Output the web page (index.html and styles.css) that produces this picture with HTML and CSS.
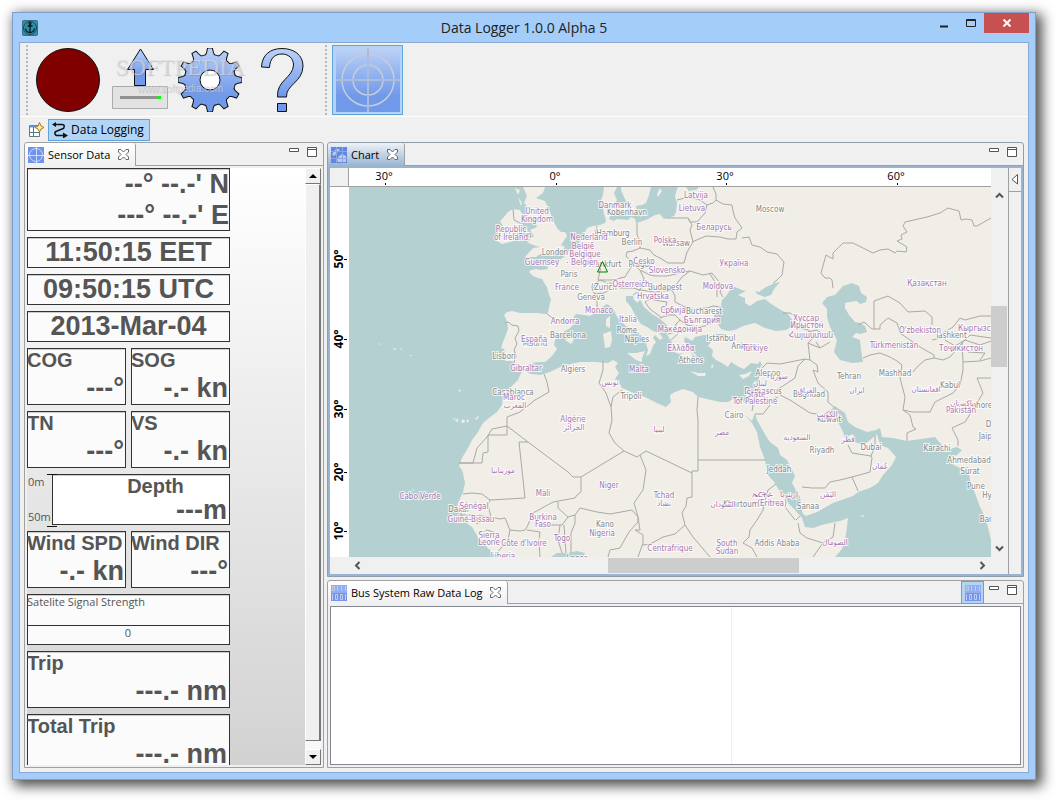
FILE: index.html
```
<!DOCTYPE html>
<html lang="en">
<head>
<meta charset="utf-8">
<title>Data Logger 1.0.0 Alpha 5</title>
<link rel="stylesheet" href="styles.css">
</head>
<body>
<svg class="defs" aria-hidden="true">
  <defs>
    <linearGradient id="blue" x1="0" y1="0" x2="0" y2="1"><stop offset="0" stop-color="#bcd2f7"/><stop offset=".75" stop-color="#7099ea"/><stop offset="1" stop-color="#7099ea"/></linearGradient>
    <path id="tooth" d="M-5 -23L-3 -27L-2 -31.500H2L3 -27L5 -23Z"/>
    <g id="teeth">
      <use href="#tooth"/><use href="#tooth" transform="rotate(30)"/><use href="#tooth" transform="rotate(60)"/><use href="#tooth" transform="rotate(90)"/>
      <use href="#tooth" transform="rotate(120)"/><use href="#tooth" transform="rotate(150)"/><use href="#tooth" transform="rotate(180)"/><use href="#tooth" transform="rotate(210)"/>
      <use href="#tooth" transform="rotate(240)"/><use href="#tooth" transform="rotate(270)"/><use href="#tooth" transform="rotate(300)"/><use href="#tooth" transform="rotate(330)"/>
    </g>
    <clipPath id="gearshape">
      <circle r="25"/>
      <use href="#tooth"/><use href="#tooth" transform="rotate(30)"/><use href="#tooth" transform="rotate(60)"/><use href="#tooth" transform="rotate(90)"/>
      <use href="#tooth" transform="rotate(120)"/><use href="#tooth" transform="rotate(150)"/><use href="#tooth" transform="rotate(180)"/><use href="#tooth" transform="rotate(210)"/>
      <use href="#tooth" transform="rotate(240)"/><use href="#tooth" transform="rotate(270)"/><use href="#tooth" transform="rotate(300)"/><use href="#tooth" transform="rotate(330)"/>
    </clipPath>
    <symbol id="cross" viewBox="0 0 11 11"><path d="M.5 .5H3L5.500 3L8 .5H10.500V3L8 5.500L10.500 8V10.500H8L5.500 8L3 10.500H.5V8L3 5.500L.5 3Z" fill="#fff" stroke="#666"/></symbol>
    <symbol id="min" viewBox="0 0 11 11"><path d="M.5 1.500H9.500V4.500H.5Z" fill="#fff" stroke="#555"/></symbol>
    <symbol id="max" viewBox="0 0 11 11"><path d="M.5 .5H9.500V9.500H.5ZM.5 2.500H9.500" fill="#fff" stroke="#555"/></symbol>
    <symbol id="bits" viewBox="0 0 16 16"><rect width="16" height="16" fill="#7695ee"/><rect width="16" height="8" fill="#92aef0"/><path d="M1.500 1.500h2v4h-2zM6.500 1v5M10.500 1v5M14.500 1v5M1.500 9v6M4.500 9.500h2v5h-2zM9.500 9.500h2v5h-2zM14.500 9v6" fill="none" stroke="#c0cde4"/></symbol>
  </defs>
</svg>
<main class="window">
  <header class="titlebar">
    <svg class="appicon" viewBox="0 0 16 16"><rect x=".5" y=".5" width="15" height="15" rx="1" fill="#2f8fa8" stroke="#3a6f80"/><circle cx="8" cy="8" r="6.500" fill="none" stroke="#174a5a"/><path d="M8 3V13M3.500 8.500C4 11.500 6 12.500 8 12.500S12 11.500 12.500 8.500M5.500 6H10.500" fill="none" stroke="#0b1a20" stroke-width="1.300"/><circle cx="8" cy="3.500" r="1.200" fill="none" stroke="#0b1a20"/></svg>
    <h1 class="title">Data Logger 1.0.0 Alpha 5</h1>
    <div class="winbuttons">
      <button class="winbtn" aria-label="Minimize"><svg width="11" height="9"><path d="M2 7.500H10" stroke="#222" stroke-width="2"/></svg></button>
      <button class="winbtn" aria-label="Maximize"><svg width="11" height="9"><path d="M1.500 .5H10.500V7.500H1.500ZM1 1.500H11" fill="none" stroke="#222"/></svg></button>
      <button class="winbtn close" aria-label="Close"><svg width="10" height="8"><path d="M1.500 .5L8.500 7.500M8.500 .5L1.500 7.500" stroke="#fff" stroke-width="2"/></svg></button>
    </div>
  </header>
  <div class="client">
    <div class="toolbar">
      <span class="grip"></span>
      <button class="tool" aria-label="Record"><svg viewBox="-32 -32 64 64"><circle r="31.500" fill="#800000" stroke="#111"/></svg></button>
      <button class="tool" aria-label="Export"><svg viewBox="-1 0 64 64"><path d="M4.500 38.500H59.500V60.500H4.500Z" fill="#e2e2e2" stroke="#aaa"/><path d="M12 49.500H52" stroke="#909090" stroke-width="3"/><path d="M49 48H53V51H49Z" fill="#0f0"/><path d="M32.500 1L45.500 21.500H37.500V37.500H26.500V21.500H19.500Z" fill="url(#blue)" stroke="#111"/></svg></button>
      <button class="tool" aria-label="Settings"><svg viewBox="-32 -32 64 64"><g fill="#111" stroke="#111" stroke-width="2"><circle r="25"/><use href="#teeth"/></g><rect x="-32" y="-32" width="64" height="64" fill="url(#blue)" clip-path="url(#gearshape)"/><circle r="10" fill="#fff" stroke="#111"/></svg></button>
      <button class="tool" aria-label="Help"><svg viewBox="-1 0 64 64"><path d="M11.500 19C12 7 20 .5 32 .5C44 .5 53 7 53 18C53 34 35.500 37 36.500 49H27.500C26.500 32 43 30 43.500 17C43.500 10 38 6 32 6C25 6 20 10 19.500 19.500ZM27.500 55.500H36.500V63.500H27.500Z" fill="url(#blue)" stroke="#111"/></svg></button>
      <span class="grip second"></span>
      <button class="tool target" aria-label="Sensor target"><svg viewBox="0 0 64 64"><rect width="64" height="64" fill="url(#blue)"/><g fill="none" stroke="#c6ccd8" stroke-width="1.500"><circle cx="32" cy="32" r="26"/><circle cx="32" cy="32" r="15"/><path d="M0 32H64M32 0V64" stroke="#aebcdc" stroke-width="2"/></g></svg></button>
      <div class="watermark"><span>SOFTPEDIA</span><small>www.softpedia.com</small></div>
    </div>
    <nav class="perspectives">
      <button class="openpersp" aria-label="Open perspective"><svg viewBox="0 0 16 16"><path d="M1.500 3.500H11.500V14.500H1.500Z" fill="#fff" stroke="#6a7a6a"/><path d="M2 4.500H11" stroke="#5a9adf" stroke-width="2"/><path d="M5.500 5V14M2 10.500H11" stroke="#4a7a9a"/><path d="M11.500 .5L13 4L16 5.500L13 7L11.500 10L10 7L7 5.500L10 4Z" fill="#ffe9a0" stroke="#a07a20"/></svg></button>
      <button class="persp"><svg viewBox="0 0 16 16"><path d="M4 2.500H10C13 2.500 13 6 10 7L5 9C2 10 2 13.500 6 13.500H12" fill="none" stroke="#111" stroke-width="1.500"/><path d="M0 2.500L4 0V5ZM16 13.500L11 10.500V16.500Z" fill="#111"/></svg>Data Logging</button>
    </nav>
    <div class="workspace">
      <section class="panel sensors">
        <div class="tabs">
          <button class="tab"><svg viewBox="0 0 16 16"><rect width="16" height="16" fill="#6f93ea"/><g fill="none" stroke="#cfdcf8"><circle cx="8" cy="8" r="6.500"/><path d="M0 8.500H16M8.500 0V16"/></g></svg>Sensor Data<svg class="x"><use href="#cross"/></svg></button>
          <div class="viewbtns"><button aria-label="Minimize view"><svg><use href="#min"/></svg></button><button aria-label="Maximize view"><svg><use href="#max"/></svg></button></div>
        </div>
        <div class="sensorbody">
          <div class="scrollarea">
            <div class="instruments">
              <div class="box position"><p class="value">--° --.-' N</p><p class="value">---° --.-' E</p></div>
              <div class="box clock">11:50:15 EET</div>
              <div class="box clock">09:50:15 UTC</div>
              <div class="box clock">2013-Mar-04</div>
              <div class="pair"><div class="box gauge"><h2>COG</h2><p class="value">---°</p></div><div class="box gauge"><h2>SOG</h2><p class="value">-.- kn</p></div></div>
              <div class="pair"><div class="box gauge"><h2>TN</h2><p class="value">---°</p></div><div class="box gauge"><h2>VS</h2><p class="value">-.- kn</p></div></div>
              <div class="depth"><div class="scale"><span>0m</span><span>50m</span></div><div class="box"><h2>Depth</h2><p class="value">---m</p></div></div>
              <div class="pair"><div class="box gauge"><h2>Wind SPD</h2><p class="value">-.- kn</p></div><div class="box gauge"><h2>Wind DIR</h2><p class="value">---°</p></div></div>
              <div class="box signal"><p>Satelite Signal Strength</p><p class="count">0</p></div>
              <div class="box gauge wide"><h2>Trip</h2><p class="value">---.- nm</p></div>
              <div class="box gauge wide"><h2>Total Trip</h2><p class="value">---.- nm</p></div>
            </div>
          </div>
          <div class="classicbar"><button aria-label="Scroll up"><svg width="8" height="4"><path d="M0 4L4 0L8 4Z"/></svg></button><div class="thumb"></div><button aria-label="Scroll down"><svg width="8" height="4"><path d="M0 0L4 4L8 0Z"/></svg></button></div>
        </div>
      </section>
      <section class="panel chart">
        <div class="tabs">
          <button class="tab active"><svg viewBox="0 0 16 16"><rect width="16" height="16" fill="#5f86e4"/><path d="M1 7L5 2H9L6 6L3 9ZM6 13L8 9L11 7L15 9V15H7Z" fill="#b9cbf2"/><path d="M0 4.500H16M0 11.500H16M5.500 0V16M11.500 0V16" stroke="#8fa6dc"/></svg>Chart<svg class="x"><use href="#cross"/></svg></button>
          <div class="viewbtns"><button aria-label="Minimize view"><svg><use href="#min"/></svg></button><button aria-label="Maximize view"><svg><use href="#max"/></svg></button></div>
        </div>
        <div class="chartbody">
          <div class="corner"></div>
          <svg class="ruler top" viewBox="349 168 642 18" preserveAspectRatio="xMidYMid slice"><path d="M385.500 183V185M556.500 183V185M726.500 183V185M897.500 183V185" stroke="#000"/><text x="384" y="180">30°</text><text x="555" y="180">0°</text><text x="725" y="180">30°</text><text x="896" y="180">60°</text></svg>
          <div class="filler"></div>
          <div class="sidestrip"><button aria-label="Show palette"><svg width="9" height="11"><path d="M6.500 .5V10L1 5.500Z" fill="#fff" stroke="#555"/></svg></button></div>
          <svg class="ruler left" viewBox="330 187 19 370" preserveAspectRatio="xMidYMid slice"><path d="M344 259.500H347M344 339.500H347M344 409.500H347M344 472.500H347M344 531.500H347" stroke="#000"/><g><text transform="translate(343 259) rotate(-90)">50°</text><text transform="translate(343 339) rotate(-90)">40°</text><text transform="translate(343 409) rotate(-90)">30°</text><text transform="translate(343 472) rotate(-90)">20°</text><text transform="translate(343 531) rotate(-90)">10°</text></g></svg>
          <svg class="map" viewBox="349 187 642 370" preserveAspectRatio="xMidYMid slice">
            <rect class="land" x="349" y="187" width="642" height="370"/>
            <g class="sea">
              <path d="M349 187L604 187L603 195L601 200L602 205L604 214L606 220L605 223L600 225L593 226L587 228L583 236L579 243L576 247L571 250L566 252L565 256L561 259L557 262L552 263L549 261L547 264L548 269L541 270L536 269L531 270L529 272L532 275L535 277L542 279L545 284L547 287L549 295L551 299L550 303L548 312L546 314L537 313L520 313L512 311L507 312L504 315L506 319L507 322L508 328L507 332L503 342L501 348L504 349L505 353L506 358L505 361L512 361L516 363L520 366L525 368L523 371L521 373L518 380L510 388L505 392L503 396L502 405L497 412L489 418L483 423L478 432L472 440L468 448L462 458L459 466L462 470L463 473L465 483L463 492L458 503L457 508L462 513L463 520L468 524L472 527L478 537L483 543L493 553L495 557L349 557Z"/>
              <path d="M617 187L614 193L617 200L612 207L611 214L609 219L614 221L617 219L628 220L631 217L635 219L636 223L640 222L648 219L655 215L660 214L664 219L668 218L674 216L676 212L677 203L675 197L676 192L678 187H651L649 195L646 203L642 205L636 206L637 211L634 213L630 212L628 205L624 197L621 190V187Z"/><path d="M686 187L689 191L696 190L699 187Z"/>
              <path d="M523 370L526 368L530 363L540 362L545 362L552 356L557 349L554 345L555 340L561 333L569 329L574 324L573 318L576 314L584 315L590 316L596 312L600 309L607 304L613 308L616 315L620 321L626 326L634 330L640 334L645 340L648 350L646 356L650 354L653 346L656 342L653 338L655 335L660 340L663 338L659 333L653 331L647 327L641 324L636 317L631 307L626 301V296L633 296L634 300L638 303L640 299L644 307L652 314L660 319L667 325L667 334L671 341L676 348L674 352L679 354L683 353L679 357L681 363L684 360L686 364L689 362L692 364L691 357L693 356L690 351L687 346L684 341L685 337L689 339L692 341L695 337L704 335L708 335L706 340L711 342L708 346L713 350L712 356L716 360L722 363L728 367L731 362L739 367L744 369L751 363L758 364L760 361L762 365L759 369L760 374L758 384L754 393L750 399L746 402L740 401L733 399L728 402L720 402L707 399L698 397L693 392L683 389L675 392L670 395L671 402L666 407L657 403L645 397L640 395L631 392L622 388L620 384L615 379L619 373L615 367L618 363L613 360L608 363L595 362L580 362L571 364L560 367L550 372L540 375L531 374Z"/>
              <path d="M711 338L716 334L725 334L723 338L717 339Z"/>
              <path d="M714 318L721 329L728 331L735 330L743 326L755 323L765 328L776 331L786 330L793 326L793 321L788 314L779 309L770 303L765 299L757 301L750 306L745 303L745 298L738 295L746 291L742 290L735 287L731 289L726 296L722 300L721 306L714 313Z"/>
              <path d="M765 297L757 294L755 291L759 292L766 287L775 283L780 282L774 289L771 295Z"/>
              <path d="M822 303L827 297L835 295L843 286L852 283L859 286L861 293L867 297L866 302L860 304L857 301L850 302L845 303L845 308L849 315L855 322L860 323L865 326L867 332L860 334L856 333L852 337L860 340L861 350L863 362L852 363L840 360L834 352L837 340L830 327L827 317L827 309Z"/>
              <path d="M745 415L752 423L757 432L760 447L765 460L768 475L775 483L780 492L785 499L790 505L795 510L802 518L805 527L813 528L822 525L830 523L840 521L848 518L847 527L845 540L842 549L835 557H991V540L988 527L984 515L980 507L975 493L970 480L968 467L960 468L952 464L947 458L957 455L962 450L957 447L947 450L940 443L935 437L921 439L907 441L893 438L882 437L880 428L876 430L867 432L855 427L848 422L845 413L839 409L835 406L830 411L833 416L838 422L843 432L847 442L849 443L848 436L853 434L855 442L863 445L869 441L877 434L880 445L888 448L896 457L892 465L883 475L878 483L870 488L858 492L853 496L833 503L817 512L806 516L803 514L801 507L800 497L792 483L795 476L787 460L780 455L778 448L770 442L766 436L757 420L755 413L752 421Z"/>
              <path d="M551 557L557 553L568 553L577 551L585 553L583 557Z"/>
            </g>
            <g class="land">
              <path d="M523 187H545L543 193L536 198L545 201L550 212L553 220L557 228L561 232L565 232L567 236L561 245L565 247L563 250L553 253L547 255L540 254L536 257L525 257L533 248L540 247L533 245L527 242L534 236L530 230L537 227L535 222L538 218L532 217L525 215L529 208L524 203L527 196Z"/><path d="M503 218L508 212L513 209L520 210L524 217L520 223L522 230L520 238L510 242L502 244L495 240L499 235L497 228L503 226L500 221Z"/>
              <path d="M515 188L520 190L518 195ZM518 197L522 203L521 206ZM620 206L626 204L628 208L624 214L619 210ZM612 209L618 209L616 214ZM657 194L660 188L662 191L658 197ZM603 334L611 331L612 340L610 347L605 348L604 341ZM606 319L610 316L610 328L606 326ZM627 353L636 353L645 351L642 358V362L636 360ZM690 371L698 373L706 373L705 376L698 376ZM739 375L745 374L752 371L749 376L743 379ZM565 340L570 337L574 340L571 344ZM860 516L865 515L863 517ZM711 366L714 364L712 369ZM693 352L697 356L695 357L688 348Z"/>
              <path d="M378 343l2 1l-1 1zM393 348l4 1l-3 1zM400 348l2 1l-1 1zM409 355l4 1h-3zM458 390h3l-1 2zM453 418l3 1l-2 1zM455 421l3-3v4zM461 421l3-2l1 3l-3 1zM466 421l3-2l-1 4zM475 419l3-3l1 1l-3 3zM412 490l2-1v2zM418 499l2-1l-1 3z"/>
            </g>
            <g class="border">
              <path d="M505 323L508 322L512 325L518 326L519 331L515 338L517 344L514 350L516 356L514 362M513 209L514 220L520 223M546 313L551 317L557 320L565 322L572 321M677 200L685 198L693 198L700 200L707 205L713 203L716 200L723 204L732 205L733 211L735 218L742 228L737 232L736 239L728 239L720 237L706 236L692 242M713 187L716 194V200M667 218L688 218L690 222L697 222L705 213L707 205M688 218L692 225L690 230L693 242L687 252L684 263M637 223L637 235L640 241L640 248L633 251L627 252L626 256L633 264L640 270M640 248L650 250L654 255L660 258L668 263L684 263M640 270L650 275L655 276L667 276L680 273L690 271L703 275L712 273L720 283L722 287L720 292L723 297"/>
              <path d="M577 247L585 249L588 248L594 240L597 226M577 252L588 262L593 265L601 266L598 280L600 280L612 280L625 277L633 264M592 290L596 283L600 280L608 283L612 283L609 290L604 293L595 294L592 290L597 297L597 309M612 283L620 288L633 288L640 290L644 279L640 270M633 295L640 290L655 292L672 290L682 277L690 271M672 290L675 296L675 302L685 307L695 309L707 308L713 306L720 307M710 274L715 282L717 287L717 297M645 302L650 309L662 318M645 302L650 299L660 301L667 302L665 309L667 317M660 318L668 315L675 315L680 320L676 324L675 332L668 334M685 307L687 313L684 318L687 325L697 327L705 326L713 322M671 340L680 332L687 326M680 320L687 325"/>
              <path d="M742 238L749 237L752 245L760 247L767 252L777 254L784 262L782 275L777 280L773 283M783 313L790 313L800 318L815 325L822 322M793 326L808 330L815 336L808 343L820 348L830 342M808 332L817 330L822 334L833 332M820 348L816 342M760 372L762 368L767 363L780 364L790 362L805 359L810 360L808 343M810 360L817 365L818 372L813 370L818 383L828 392L828 402L835 408M805 359L798 366L795 378L780 388L763 394M780 389L780 395L790 400L810 413L823 415L830 411M755 414L763 414L770 405L765 403L778 397M754 400L752 411M762 382L758 389L756 400"/>
              <path d="M802 487L812 488L825 488L830 482L840 480L852 477L870 472L872 458L871 456L852 453L848 445M852 477L858 491M871 456L875 446V435M698 397L697 410L698 420V471H692L692 497L687 498L686 506L682 513L685 525L693 537L710 557M698 460H766M692 473L646 451L637 457L624 451L615 443L609 433L612 420L611 407L606 393L599 383L603 370L603 361M611 407L613 397L622 390M624 451L581 477H573L568 472L528 442L507 426V417L520 412L535 400L549 392L547 382L544 374M507 426L492 429L487 437L477 448L473 463H459M507 426V435H488V452L483 453L482 463H459M528 442H519L525 498L490 500L482 494L472 493L463 494"/>
              <path d="M490 500L488 505L491 517L473 515H458M491 517L482 521L476 524M491 517L500 519L505 518L510 530L508 540L495 555M478 534L487 530L496 533L495 543M510 530L520 531L525 530L527 527L533 513L553 502L575 498L577 495L581 492V477M527 530L540 532L539 540L540 557M558 502L558 508L568 517L562 525L540 525M560 525L558 540L562 553M564 525L565 540L566 553M568 517L575 515L575 523L571 533L571 553M575 515L580 508L597 512L610 514L632 510L638 517L638 522L629 532L620 548L610 550L608 557M640 455L646 470L643 490L634 503L638 517L640 530L635 530L643 535L643 543L638 557M643 545L650 544L663 537L675 534L685 525"/>
              <path d="M776 484L768 490L765 500L763 510L757 520L750 530L749 537L743 543L752 548L757 557M764 502L775 503L785 507L795 520M798 523L800 533L807 538L823 543L833 537L835 523M823 543L813 557M796 520L800 516M991 218L977 226L974 226L972 220L966 219L961 220L959 211L948 208L940 213L927 217L905 222L903 226L907 232L901 235L902 239L897 241L907 247L906 252L897 251L895 253L888 249L880 250L873 253L853 243L843 243L833 253L833 259L826 255L821 273L825 278L830 278L832 280L833 288"/>
              <path d="M858 325L864 322L872 329H874V301L888 296L900 303L908 312L925 311L932 317L932 325M874 329L880 329L880 325L888 318L897 323L900 333L910 340L920 347L934 355V358M863 358L870 355L880 353L890 357L897 361L902 365L900 378L905 397L903 410L910 415L913 427L916 429L907 433V441M913 372L918 366L925 360L934 358L943 360L950 357L962 343L970 335L991 338M903 410L912 412L930 412L935 402L953 393L960 385L963 370L963 362L980 361L991 358M991 378H977L983 393L977 403L965 422L952 428L958 440V446M932 340L940 338L943 333L953 327L960 318L965 320L980 316L991 316M962 343L963 362M945 340L955 346L965 340L980 345L991 341M968 352L985 353L980 360"/>
            </g>
            <g class="city">
              <text x="770" y="212">Moscow</text><text x="627" y="215">Kobenhavn</text><text x="613" y="236">Hamburg</text><text x="632" y="245">Berlin</text><text x="676" y="246">Warsaw</text><text x="605" y="267">Frankfurt</text><text x="641" y="267">Prague</text><text x="569" y="277">Paris</text><text x="555" y="255">London</text><text x="604" y="290">(Zurich</text><text x="665" y="290">Budapest</text><text x="591" y="300">Geneva</text><text x="704" y="314">Bucharest</text><text x="627" y="333">Rome</text><text x="637" y="342">Naples</text><text x="721" y="341">Istanbul</text><text x="744" y="349">Ankara</text><text x="691" y="363">Athens</text><text x="568" y="338">Barcelona</text><text x="535" y="346">Madrid</text><text x="504" y="359">Lisbon</text><text x="573" y="372">Algiers</text><text x="513" y="395">Casablanca</text><text x="631" y="399">Tripoli</text><text x="734" y="418">Cairo</text><text x="768" y="376">Aleppo</text><text x="763" y="394">Damascus</text><text x="809" y="397">Baghdad</text><text x="849" y="379">Tehran</text><text x="895" y="376">Mashhad</text><text x="950" y="388">Kabul</text><text x="951" y="338">Tashkent</text><text x="829" y="422">Kuwait</text><text x="822" y="453">Riyadh</text><text x="871" y="450">Dubai</text><text x="779" y="472">Jeddah</text><text x="741" y="507">Khartoum</text><text x="808" y="509">Sanaa</text><text x="777" y="546">Addis Ababa</text><text x="937" y="451">Karachi</text><text x="969" y="463">Ahmedabad</text><text x="970" y="474">Surat</text><text x="976" y="489">Pune</text><text x="605" y="527">Kano</text><text x="459" y="512">Dakar</text><text x="980" y="408">Lahore</text><text x="995" y="427">Delhi</text><text x="989" y="439">Jaipur</text><text x="1002" y="498">Hyderabad</text><text x="998" y="522">Bangalore</text><text x="520" y="238">Dublin</text><text x="577" y="561">Lagos</text>
            </g>
            <g class="country">
              <text x="537" y="214">United</text><text x="537" y="222">Kingdom</text><text x="511" y="232">Republic</text><text x="511" y="240">of Ireland</text><text x="542" y="265">Guernsey</text><text x="615" y="208">Danmark</text><text x="696" y="198">Latvija</text><text x="692" y="211">Lietuva</text><text x="714" y="230">Беларусь</text><text x="589" y="240">Nederland</text><text x="583" y="249">België</text><text x="585" y="257">Belgique</text><text x="582" y="265">- Belgien</text><text x="665" y="243">Polska</text><text x="644" y="264">Česko</text><text x="667" y="273">Slovensko</text><text x="734" y="266">Україна</text><text x="567" y="290">France</text><text x="631" y="287">Österreich</text><text x="653" y="299">Hrvatska</text><text x="718" y="289">Moldova</text><text x="599" y="313">Monaco</text><text x="673" y="313">Србија</text><text x="702" y="323">България</text><text x="628" y="322">Italia</text><text x="680" y="332">Македонија</text><text x="565" y="324">Andorra</text><text x="534" y="342">España</text><text x="681" y="351">Ελλάδα</text><text x="755" y="351">Türkiye</text><text x="639" y="372">Malta</text><text x="526" y="371">Gibraltar</text><text x="806" y="321">Хуссар</text><text x="807" y="328">Ирыстон</text><text x="811" y="338">Հայաստան</text><text x="927" y="286">Қазақстан</text><text x="920" y="333">O'zbekiston</text><text x="981" y="331">Кыргызстан</text><text x="961" y="351">Тоҷикистон</text><text x="894" y="348">Türkmenistan</text><text x="514" y="400">Maroc</text><text x="515" y="408">المغرب</text><text x="573" y="422">Algérie</text><text x="574" y="430">الجزائر</text><text x="610" y="385">تونس</text><text x="659" y="432">ليبيا</text><text x="722" y="435">مصر</text><text x="503" y="473">موريتانيا</text><text x="420" y="499">Cabo Verde</text><text x="474" y="509">Sénégal</text><text x="471" y="522">Guiné-Bissau</text><text x="489" y="538">Sierra</text><text x="489" y="545">Leone</text><text x="524" y="546">Côte d'Ivoire</text><text x="503" y="559">Liberia</text><text x="543" y="496">Mali</text><text x="543" y="520">Burkina</text><text x="543" y="527">Faso</text><text x="562" y="541">Togo</text><text x="609" y="488">Niger</text><text x="602" y="536">Nigeria</text><text x="664" y="498">Tchad</text><text x="664" y="506">تشاد</text><text x="670" y="551">Centrafrique</text><text x="727" y="546">South</text><text x="727" y="554">Sudan</text><text x="723" y="507">السودان</text><text x="762" y="497">ኤርትራ</text><text x="789" y="497">إريتريا</text><text x="772" y="506">(Eritrea)</text><text x="779" y="379">سوريا</text><text x="760" y="386">لبنان</text><text x="756" y="397">State</text><text x="755" y="404">Tof Palestine</text><text x="807" y="393">العراق</text><text x="857" y="393">ایران</text><text x="926" y="392">افغانستان</text><text x="962" y="406">پاکستان</text><text x="961" y="413">Pakistan</text><text x="827" y="417">الكويت</text><text x="797" y="440">السعودية</text><text x="848" y="442">قطر</text><text x="880" y="469">عُمان</text><text x="828" y="497">اليَمَن</text><text x="835" y="545">الصومال</text>
            </g>
            <path d="M602.500 261.500L607.500 272H597.500Z" fill="none" stroke="#008000"/>
          </svg>
          <div class="flatbar vertical"><button aria-label="Up"><svg width="9" height="7"><path d="M1 5.500L4.500 2L8 5.500"/></svg></button><div class="thumb"></div><button aria-label="Down"><svg width="9" height="7"><path d="M1 1.500L4.500 5L8 1.500"/></svg></button></div>
          <div class="flatbar horizontal"><button aria-label="Left"><svg width="7" height="9"><path d="M5.500 1L2 4.500L5.500 8"/></svg></button><div class="thumb"></div><button aria-label="Right"><svg width="7" height="9"><path d="M1.500 1L5 4.500L1.500 8"/></svg></button></div>
        </div>
      </section>
      <section class="panel buslog">
        <div class="tabs">
          <button class="tab"><svg><use href="#bits"/></svg>Bus System Raw Data Log<svg class="x"><use href="#cross"/></svg></button>
          <button class="rawbtn" aria-label="Show raw bits"><svg><use href="#bits"/></svg></button>
          <div class="viewbtns"><button aria-label="Minimize view"><svg><use href="#min"/></svg></button><button aria-label="Maximize view"><svg><use href="#max"/></svg></button></div>
        </div>
        <div class="logbody"><div class="log"><div class="col"></div></div></div>
      </section>
    </div>
  </div>
</main>
</body>
</html>
```
FILE: styles.css
```
* { box-sizing: border-box; }
body { margin: 0; height: 100vh; padding: 12px 20px 20px 12px; background: #fff; font: 11px/16px "Open Sans", "Noto Sans", sans-serif; color: #000; overflow: hidden; }
h1, h2, p { margin: 0; font-weight: normal; }
button { margin: 0; padding: 0; border: 0; background: none; font: inherit; color: inherit; display: flex; align-items: center; justify-content: center; }
svg { display: block; }
.defs { position: absolute; width: 0; height: 0; }

.window { height: 100%; display: flex; flex-direction: column; padding: 0 6px 6px; border: 1px solid #7d9fc8; background: #a5cdf9; box-shadow: 4px 4px 12px 2px rgba(0,0,0,.7); }
.titlebar { flex: none; height: 29px; display: grid; grid-template-columns: 1fr auto 1fr; align-items: center; }
.appicon { width: 16px; height: 16px; margin-left: 3px; }
.title { font-size: 14px; line-height: 28px; color: #222; }
.winbuttons { align-self: start; justify-self: end; display: flex; height: 20px; }
.winbtn { width: 27px; }
.winbtn.close { width: 45px; background: #c75050; }

.client { flex: 1; min-height: 0; display: flex; flex-direction: column; border: 1px solid #8aa8d2; background: #f0f0f0; }
.toolbar { position: relative; flex: none; height: 74px; display: flex; align-items: center; padding: 0 6px; border-bottom: 1px solid #fff; }
.grip { width: 2px; height: 70px; margin-right: 8px; background: repeating-linear-gradient(#b8b8b8 0 2px, transparent 2px 4px); }
.grip.second { margin: 0 5px; }
.tool { width: 64px; height: 64px; margin-right: 7px; }
.tool svg { width: 64px; height: 64px; }
.tool.target { width: 71px; height: 70px; margin: 0; border: 1px solid #5fa3e0; background: #b2d5f5; }
.watermark { position: absolute; left: 94px; top: 9px; width: 132px; text-align: center; pointer-events: none; color: rgba(225,225,230,.6); text-shadow: 1px 1px 1px rgba(120,120,130,.35); font: 24px/30px "Liberation Serif", serif; }
.watermark span, .watermark small { display: block; }
.watermark small { font: 10px/14px "Liberation Sans", sans-serif; }

.perspectives { flex: none; height: 25px; display: flex; align-items: center; padding: 0 8px; gap: 4px; font-size: 12px; }
.openpersp svg, .persp svg { width: 16px; height: 16px; }
.persp { height: 22px; padding: 0 5px 0 3px; gap: 3px; border: 1px solid #5fa3e0; background: #b2d5f5; }

.workspace { flex: 1; min-height: 0; display: grid; grid-template-columns: 300px minmax(0, 1fr); grid-template-rows: minmax(0, 1fr) 188px; gap: 3px; padding: 0 4px 4px; }
.panel { display: flex; flex-direction: column; min-height: 0; border: 1px solid #a0a0a0; border-radius: 3px 3px 0 0; }
.sensors { grid-row: 1 / 3; }
.tabs { flex: none; height: 23px; display: flex; border-bottom: 1px solid #a0a0a0; font-size: 11px; }
.tab { height: 23px; padding: 0 5px 0 3px; gap: 4px; border-right: 1px solid #a0a0a0; border-radius: 3px 3px 0 0; background: linear-gradient(#fff, #f0f0f0); }
.tab.active { background: linear-gradient(#edf2f8, #99b4d1); }
.tab svg { width: 16px; height: 16px; }
.tab svg.x { width: 11px; height: 11px; margin: 0 1px 0 4px; }
.viewbtns { margin-left: auto; display: flex; gap: 7px; padding: 4px 5px 0 0; align-items: flex-start; }
.viewbtns svg { width: 11px; height: 11px; }

.sensorbody { flex: 1; min-height: 0; display: grid; grid-template-columns: 1fr 16px; padding: 2px; }
.scrollarea { min-height: 0; overflow: hidden; background: linear-gradient(#fff, #efefef 35%, #d2d2d2); }
.instruments { width: 203px; display: flex; flex-direction: column; gap: 6px; color: #555; font-size: 11px; }
.box { border: 1px solid #333; background: #fbfbfb; box-shadow: inset 0 1px #ccc; flex: none; }
.box h2 { font: bold 20px/22px "Liberation Sans", Arial, sans-serif; margin-left: -1px; white-space: nowrap; }
.value { font: bold 27px/32px "Liberation Sans", Arial, sans-serif; text-align: right; padding-right: 2px; white-space: nowrap; }
.position { height: 63px; }
.position .value { padding-right: 0; line-height: 31px; }
.clock { height: 31px; font: bold 27px/29px "Liberation Sans", Arial, sans-serif; text-align: center; }
.pair { display: grid; grid-template-columns: 1fr 1fr; gap: 5px; }
.gauge { height: 57px; }
.gauge .value { line-height: 34px; }
.pair .value { padding-right: 1px; }
.depth { display: grid; grid-template-columns: 25px 1fr; height: 51px; }
.depth .box { position: relative; background: #fff; }
.depth .box::before { content: ""; position: absolute; left: -6px; top: -1px; width: 10px; height: 51px; border: solid #111; border-width: 1px 0; }
.depth h2 { text-align: center; padding-left: 30px; }
.depth .value { line-height: 26px; }
.scale { display: flex; flex-direction: column; justify-content: space-between; padding-left: 1px; }
.signal { height: 51px; line-height: 14px; }
.signal p { height: 30px; margin-left: -1px; white-space: nowrap; }
.signal .count { height: 18px; text-align: center; border-top: 1px solid #333; }

.classicbar { display: flex; flex-direction: column; background: #f8f8f8; }
.classicbar button { flex: none; height: 16px; border: 1px solid; border-color: #fff #777 #777 #fff; background: #f0f0f0; }
.classicbar .thumb { flex: 1; margin-bottom: 8px; border: solid; border-width: 1px 2px 1px 1px; border-color: #fff #777 #777 #fff; background: #f0f0f0; }

.chart { border-color: #8f9dad; }
.chartbody { flex: 1; min-height: 0; display: grid; grid-template-columns: 19px minmax(0, 1fr) 17px 13px; grid-template-rows: 19px minmax(0, 1fr) 17px; padding: 2px; background: #99b4d1; }
.corner { background: #f0f0f0; border: solid #a0a0a0; border-width: 0 1px 1px 0; }
.ruler { width: 100%; height: 100%; min-height: 0; background: #fff; font-size: 11px; text-anchor: middle; }
.ruler.top { border-bottom: 1px solid #a0a0a0; }
.ruler.left { font-weight: bold; font-size: 12px; }
.filler { background: #f0f0f0; }
.sidestrip { grid-column: 4; grid-row: 1 / 4; background: #f0f0f0; border-left: 1px solid #a0a0a0; }
.sidestrip button { width: 100%; height: 24px; border-bottom: 1px solid #a0a0a0; }
.map { width: 100%; height: 100%; min-height: 0; text-anchor: middle; font: 8px "DejaVu Sans Condensed", "DejaVu Sans", sans-serif; }
.land { fill: #f1eee8; }
.sea { fill: #b5d0d0; }
.border { fill: none; stroke: #aaa9a5; stroke-linejoin: round; }
.city, .country { stroke: rgba(255,255,255,.75); stroke-width: 2px; paint-order: stroke; }
.city { fill: #83878a; }
.country { fill: #a877b0; }
.flatbar { display: flex; background: #f0f0f0; }
.flatbar path { fill: none; stroke: #555; stroke-width: 2px; }
.flatbar button { flex: none; width: 17px; height: 17px; }
.flatbar .thumb { background: #cdcdcd; }
.vertical { flex-direction: column; padding-right: 1px; }
.vertical .thumb { height: 61px; margin: 102px 0 auto; }
.horizontal { grid-column: 1 / 4; grid-row: 3; padding: 1px 17px 1px 19px; }
.horizontal button { height: 15px; }
.horizontal .thumb { width: 191px; margin: 0 auto 0 242px; }

.rawbtn { margin-left: auto; width: 23px; height: 23px; border: 1px solid #5fa3e0; background: #b2d5f5; }
.rawbtn svg { width: 16px; height: 16px; }
.rawbtn + .viewbtns { margin-left: 5px; }
.logbody { flex: 1; min-height: 0; padding: 2px; display: flex; }
.log { flex: 1; border: 1px solid #828790; background: #fff; }
.col { width: 401px; height: 100%; border-right: 1px solid #eee; }
```
